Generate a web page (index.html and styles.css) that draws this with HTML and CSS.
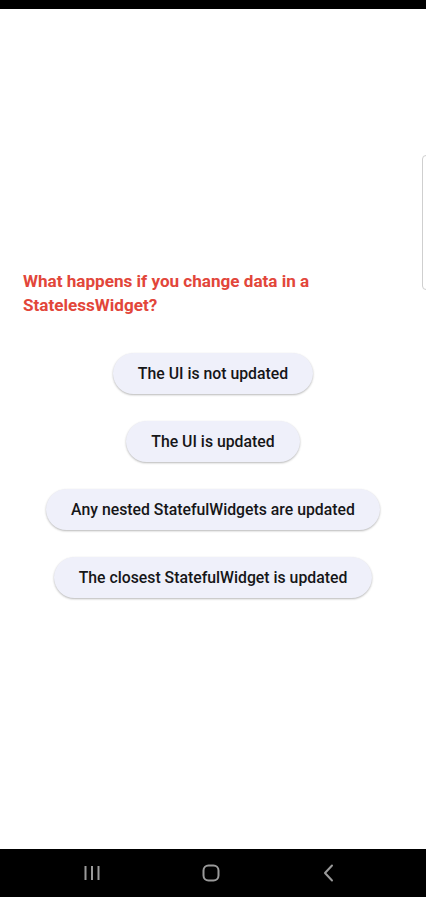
FILE: index.html
```html
<!DOCTYPE html>
<html>
<head>
<meta charset="utf-8">
<link rel="stylesheet" href="styles.css">
</head>
<body>
<div class="screen">
  <div class="status-bar"></div>
  <main class="content">
    <h1 class="question">What happens if you change data in a StatelessWidget?</h1>
    <div class="answers">
      <button class="answer">The UI is not updated</button>
      <button class="answer">The UI is updated</button>
      <button class="answer">Any nested StatefulWidgets are updated</button>
      <button class="answer">The closest StatefulWidget is updated</button>
    </div>
    <div class="edge-handle"></div>
  </main>
  <nav class="nav-bar">
    <svg class="nav-icon" width="20" height="20" viewBox="0 0 20 20">
      <path d="M3.5 3v14M10 3v14M16.5 3v14" stroke="#9a9a9a" stroke-width="2" fill="none"/>
    </svg>
    <svg class="nav-icon" width="20" height="20" viewBox="0 0 20 20">
      <rect x="2.5" y="2.5" width="15" height="15" rx="5" stroke="#9a9a9a" stroke-width="2" fill="none"/>
    </svg>
    <svg class="nav-icon" width="20" height="20" viewBox="0 0 20 20">
      <path d="M13 2.5L6 10l7 7.5" stroke="#9a9a9a" stroke-width="2" fill="none" stroke-linecap="round" stroke-linejoin="round"/>
    </svg>
  </nav>
</div>
</body>
</html>
```
FILE: styles.css
```css
* { box-sizing: border-box; }
html, body {
  margin: 0;
  padding: 0;
  background: #fff;
}
body {
  font-family: Roboto, "Noto Sans", sans-serif;
  width: 426px;
  height: 897px;
  overflow: hidden;
}
.screen {
  display: flex;
  flex-direction: column;
  height: 897px;
}
.status-bar {
  height: 9px;
  background: #000;
  flex: none;
}
.content {
  position: relative;
  flex: 1;
  padding: 260px 23px 0 23px;
}
.question {
  margin: 0;
  color: #e2463a;
  font-size: 17.1px;
  font-weight: 700;
  line-height: 24px;
}
.answers {
  margin-top: 36px;
  display: flex;
  flex-direction: column;
  align-items: center;
  gap: 27px;
}
.answer {
  font-family: Roboto, "Noto Sans", sans-serif;
  font-size: 15.8px;
  font-weight: 500;
  color: #161618;
  background: #eff0fa;
  border: none;
  border-radius: 21px;
  height: 41px;
  padding: 0 25px;
  box-shadow: 0 1px 2px rgba(0,0,0,0.22), 0 1px 3px rgba(0,0,0,0.08);
}
.edge-handle {
  position: absolute;
  right: -4px;
  top: 146px;
  width: 8px;
  height: 135px;
  border: 1.5px solid #cfcfcf;
  border-radius: 4px;
}
.nav-bar {
  height: 48px;
  background: #000;
  flex: none;
  display: flex;
  align-items: center;
  gap: 98.5px;
  padding: 0 0 0 82px;
}
.nav-icon {
  display: block;
}
```
